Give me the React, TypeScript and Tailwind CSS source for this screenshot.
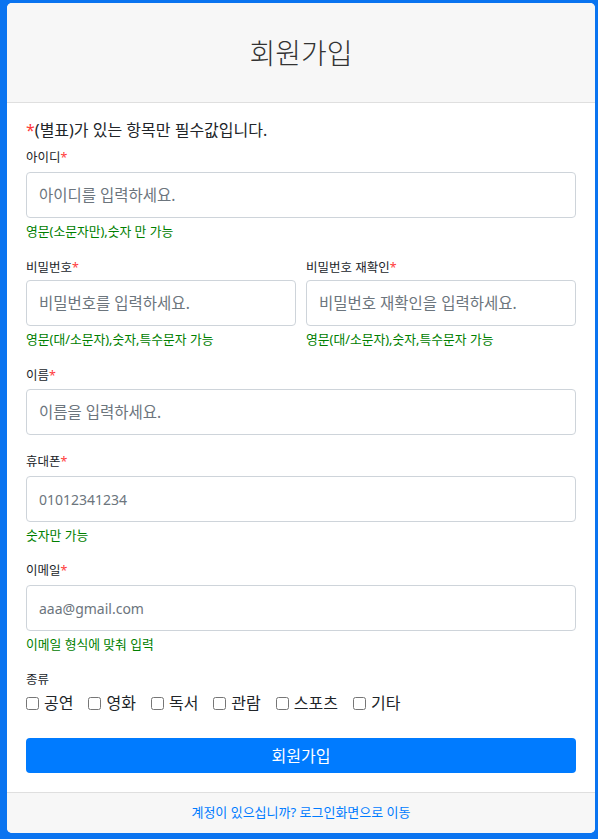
import React from 'react';

const Req = () => <span className="text-[#ff3b3b]">*</span>;

const Label = ({ children, required = true, className = '' }: { children: React.ReactNode; required?: boolean; className?: string }) => (
  <label className={`block text-[12.5px] leading-[18px] text-[#212529] ${className}`}>
    {children}
    {required && <Req />}
  </label>
);

const Input = ({ placeholder, className = '' }: { placeholder: string; className?: string }) => (
  <input
    placeholder={placeholder}
    className={`block w-full h-[46px] rounded-[4px] border border-[#ced4da] bg-white px-[12px] text-[#495057] placeholder:text-[#6c757d] outline-none ${className}`}
  />
);

const Help = ({ children }: { children: React.ReactNode }) => (
  <p className="mt-[4px] text-[12.8px] leading-[18px] text-[#008000]">{children}</p>
);

const kinds = ['공연', '영화', '독서', '관람', '스포츠', '기타'];

export default function App() {
  return (
    <div
      className="w-[598px] h-[839px] bg-[#0a74f0] pt-[3px] pl-[7px] pr-[3px] pb-[6px]"
      style={{ fontFamily: '"Noto Sans", "Noto Sans CJK KR", sans-serif' }}
    >
      <div className="flex h-full w-full flex-col overflow-hidden rounded-[5px] bg-white">
        {/* header */}
        <div className="flex h-[100px] shrink-0 items-center justify-center border-b border-[#dfdfdf] bg-[#f7f7f7]">
          <h1 className="text-[28px] font-light leading-[34px] text-[#333]">회원가입</h1>
        </div>

        {/* body */}
        <div className="flex-1 px-[19px] pt-[15px]">
          <p className="text-[16px] leading-[24px] text-[#212529]">
            <Req />(별표)가 있는 항목만 필수값입니다.
          </p>

          <Label className="mt-[7px]">아이디</Label>
          <Input placeholder="아이디를 입력하세요." className="mt-[5px] text-[15.5px]" />
          <Help>영문(소문자만),숫자 만 가능</Help>

          <div className="mt-[19px] grid grid-cols-2 gap-x-[10px]">
            <div>
              <Label>비밀번호</Label>
              <Input placeholder="비밀번호를 입력하세요." className="mt-[3px] text-[15.5px]" />
              <Help>영문(대/소문자),숫자,특수문자 가능</Help>
            </div>
            <div>
              <Label>비밀번호 재확인</Label>
              <Input placeholder="비밀번호 재확인을 입력하세요." className="mt-[3px] text-[15.5px]" />
              <Help>영문(대/소문자),숫자,특수문자 가능</Help>
            </div>
          </div>

          <Label className="mt-[19px]">이름</Label>
          <Input placeholder="이름을 입력하세요." className="mt-[4px] text-[15.5px]" />

          <Label className="mt-[18px]">휴대폰</Label>
          <Input placeholder="01012341234" className="mt-[5px] text-[14px]" />
          <Help>숫자만 가능</Help>

          <Label className="mt-[18px]">이메일</Label>
          <Input placeholder="aaa@gmail.com" className="mt-[5px] text-[14px]" />
          <Help>이메일 형식에 맞춰 입력</Help>

          <Label className="mt-[18px]" required={false}>종류</Label>
          <div className="mt-[5px] flex items-center">
            {kinds.map((k) => (
              <label key={k} className="mr-[15px] flex items-center text-[16px] leading-[18px] text-[#212529]">
                <input type="checkbox" className="m-0 mr-[5px] h-[13px] w-[13px]" />
                {k}
              </label>
            ))}
          </div>

          <button className="mt-[26px] h-[35px] w-full rounded-[4px] bg-[#007bff] text-[16px] text-white">
            회원가입
          </button>
        </div>

        {/* footer */}
        <div className="flex h-[41px] shrink-0 items-center justify-center border-t border-[#dfdfdf] bg-[#f7f7f7]">
          <a href="#" className="text-[13px] text-[#007bff]">계정이 있으십니까? 로그인화면으로 이동</a>
        </div>
      </div>
    </div>
  );
}
